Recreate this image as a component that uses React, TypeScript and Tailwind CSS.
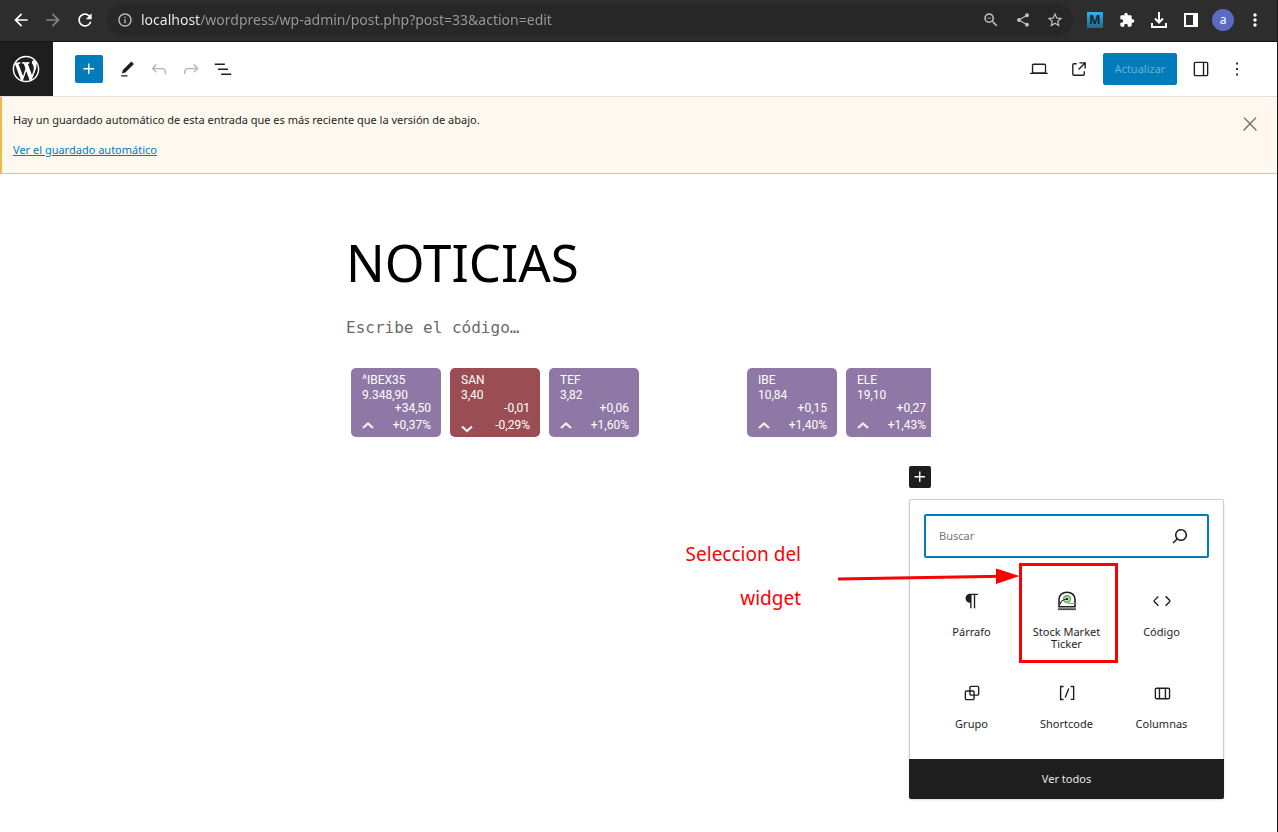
import React from "react";
import {
  MdArrowBack,
  MdArrowForward,
  MdExtension,
  MdInfoOutline,
  MdMoreVert,
  MdRefresh,
  MdShare,
  MdStarBorder,
  MdZoomOut,
} from "react-icons/md";

const paths = {
  plus: "M11 12.5V17.5H12.5V12.5H17.5V11H12.5V6H11V11H6V12.5H11Z",
  pencil: "m20.1 5.1L16.9 2 6.2 12.7l-1.3 4.4 4.5-1.3L20.1 5.1zM4 20.8h8v-1.5H4v1.5z",
  undo: "M18.3 11.7c-.6-.6-1.4-.9-2.3-.9H6.7l2.9-3.3-1.1-1-4.5 5L8.5 16l1-1-2.7-2.7H16c.5 0 .9.2 1.3.5 1 1 1 3.4 1 4.5v.3h1.5v-.2c0-1.5 0-4.3-1.5-5.7z",
  redo: "M15.6 6.5l-1.1 1 2.9 3.3H8c-.9 0-1.7.3-2.3.9-1.4 1.5-1.4 4.2-1.4 5.6v.2h1.5v-.3c0-1.1 0-3.5 1-4.5.3-.3.7-.5 1.3-.5h9.2L14.5 15l1.1 1.1 4.6-4.6-4.6-5z",
  list: "M3 6h11v1.5H3V6Zm3.5 5.5h11V13h-11v-1.5ZM21 17H10v1.5h11V17Z",
  desktop: "M20.5 16h-.7V8c0-1.1-.9-2-2-2H6.2c-1.1 0-2 .9-2 2v8h-.7c-.8 0-1.5.7-1.5 1.5h20c0-.8-.7-1.5-1.5-1.5zM5.7 8c0-.3.2-.5.5-.5h11.7c.3 0 .5.2.5.5v7.6H5.7V8z",
  external: "M19.5 4.5h-7V6h4.44l-5.97 5.97 1.06 1.06L18 7.06v4.44h1.5v-7Zm-13 1a2 2 0 0 0-2 2v10a2 2 0 0 0 2 2h10a2 2 0 0 0 2-2v-3H17v3a.5.5 0 0 1-.5.5h-10a.5.5 0 0 1-.5-.5v-10a.5.5 0 0 1 .5-.5h3V5.5h-3Z",
  drawer: "M18 4H6c-1.1 0-2 .9-2 2v12c0 1.1.9 2 2 2h12c1.1 0 2-.9 2-2V6c0-1.1-.9-2-2-2zm-4 14.5H6c-.3 0-.5-.2-.5-.5V6c0-.3.2-.5.5-.5h8v13zm4.5-.5c0 .3-.2.5-.5.5h-2.5v-13H18c.3 0 .5.2.5.5v12z",
  more: "M13 19h-2v-2h2v2zm0-6h-2v-2h2v2zm0-6h-2V5h2v2z",
  close: "M13 11.8l6.1-6.3-1-1-6.1 6.2-6.1-6.2-1 1 6.1 6.3-6.5 6.7 1 1 6.5-6.6 6.5 6.6 1-1z",
  search: "M13 5c-3.3 0-6 2.7-6 6 0 1.4.5 2.7 1.3 3.7l-3.8 3.8 1.1 1.1 3.8-3.8c1 .8 2.3 1.3 3.7 1.3 3.3 0 6-2.7 6-6S16.3 5 13 5zm0 10.5c-2.5 0-4.5-2-4.5-4.5s2-4.5 4.5-4.5 4.5 2 4.5 4.5-2 4.5-4.5 4.5z",
  paragraph: "m9.99609 14v-.2251l.00391.0001v6.225h1.5v-14.5h2.5v14.5h1.5v-14.5h3v-1.5h-8.50391c-2.76142 0-5 2.23858-5 5 0 2.7614 2.23858 5 5 5z",
  code: "M20.8 10.7l-4.3-4.3-1.1 1.1 4.3 4.3c.1.1.1.3 0 .4l-4.3 4.3 1.1 1.1 4.3-4.3c.7-.8.7-1.9 0-2.6zM4.2 11.8l4.3-4.3-1-1-4.3 4.3c-.7.7-.7 1.8 0 2.5l4.3 4.3 1.1-1.1-4.3-4.3c-.2-.1-.2-.3-.1-.4z",
  group: "M18 4h-7c-1.1 0-2 .9-2 2v3H6c-1.1 0-2 .9-2 2v7c0 1.1.9 2 2 2h7c1.1 0 2-.9 2-2v-3h3c1.1 0 2-.9 2-2V6c0-1.1-.9-2-2-2zm-4.5 14c0 .3-.2.5-.5.5H6c-.3 0-.5-.2-.5-.5v-7c0-.3.2-.5.5-.5h3V13c0 1.1.9 2 2 2h2.5v3zm0-4.5H11c-.3 0-.5-.2-.5-.5v-2.5H13c.3 0 .5.2.5.5v2.5zm5-.5c0 .3-.2.5-.5.5h-3V11c0-1.1-.9-2-2-2h-2.5V6c0-.3.2-.5.5-.5h7c.3 0 .5.2.5.5v7z",
  shortcode: "M16 4.2v1.5h2.5v12.5H16v1.5h4V4.2h-4zM4.2 19.8h4v-1.5H5.8V5.8h2.5V4.2h-4l-.1 15.6zm5.1-3.1l1.4.6 4-10-1.4-.6-4 10z",
  columns: "M15 7.5h-5v10h5v-10Zm1.5 0v10H19a.5.5 0 0 0 .5-.5V8a.5.5 0 0 0-.5-.5h-2.5ZM6 7.5h2.5v10H6a.5.5 0 0 1-.5-.5V8a.5.5 0 0 1 .5-.5ZM6 6h13a2 2 0 0 1 2 2v9a2 2 0 0 1-2 2H6a2 2 0 0 1-2-2V8a2 2 0 0 1 2-2Z",
};

type IconName = keyof typeof paths;

function Icon({ name, className = "size-[22px]" }: { name: IconName; className?: string }) {
  return (
    <svg viewBox="0 0 24 24" fill="currentColor" fillRule="evenodd" className={className} aria-hidden="true">
      <path d={paths[name]} />
    </svg>
  );
}

function WordPressLogo() {
  return (
    <svg viewBox="-2 -2 24 24" fill="currentColor" className="size-8" aria-hidden="true">
      <path d="M20 10c0-5.51-4.49-10-10-10C4.48 0 0 4.49 0 10c0 5.52 4.48 10 10 10 5.51 0 10-4.48 10-10zM7.78 15.37L4.37 6.22c.55-.02 1.17-.08 1.17-.08.5-.06.44-1.13-.06-1.11 0 0-1.45.11-2.37.11-.18 0-.37 0-.58-.01C4.12 2.69 6.87 1.11 10 1.11c2.33 0 4.45.87 6.05 2.34-.68-.11-1.65.39-1.65 1.58 0 .74.45 1.36.9 2.1.35.61.55 1.36.55 2.46 0 1.49-1.4 5-1.4 5l-3.03-8.37c.54-.02.82-.17.82-.17.5-.05.44-1.25-.06-1.22 0 0-1.44.12-2.38.12-.87 0-2.33-.12-2.33-.12-.5-.03-.56 1.2-.06 1.22l.92.08 1.26 3.41zM17.41 10c.24-.64.74-1.87.43-4.25.7 1.29 1.05 2.71 1.05 4.25 0 3.29-1.73 6.24-4.4 7.78.97-2.59 1.94-5.2 2.92-7.78zM6.1 18.09C3.12 16.65 1.11 13.53 1.11 10c0-1.3.23-2.48.72-3.59C3.25 10.3 4.67 14.2 6.1 18.09zm4.03-6.63l2.58 6.98c-.86.29-1.76.45-2.71.45-.79 0-1.57-.11-2.29-.33.81-2.38 1.62-4.74 2.42-7.1z" />
    </svg>
  );
}

function TickerIcon() {
  return (
    <svg viewBox="0 0 22 22" fill="none" className="size-[22px]" aria-hidden="true">
      <path d="M3 16.8V9.5C3 5 6.5 2.2 11 2.2S19 5 19 9.5V16.8Z" stroke="#1e1e1e" strokeWidth="1.6" />
      <path d="M2 19.2H20" stroke="#4a4a4a" strokeWidth="1.8" />
      <circle cx="11" cy="9" r="3.3" fill="#cfe8c8" stroke="#62ad57" strokeWidth="1.4" />
      <path d="M10 12.3C11 13.8 12.500 13.500 20.500 13.500" stroke="#62ad57" strokeWidth="1.1" />
      <path d="M4 14.500C4.500 11.500 7 9.500 11 9" stroke="#1e1e1e" strokeWidth="1.2" />
      <circle cx="11" cy="9" r="1.2" fill="#1e1e1e" />
    </svg>
  );
}

function BrowserButton({ label, className = "text-white", children }: { label: string; className?: string; children: React.ReactNode }) {
  return (
    <button type="button" aria-label={label} className={`flex h-8 w-8 shrink-0 items-center justify-center ${className}`}>
      {children}
    </button>
  );
}

function ToolButton({ label, icon, className = "w-8", iconClassName, disabled }: { label: string; icon: IconName; className?: string; iconClassName?: string; disabled?: boolean }) {
  return (
    <button
      type="button"
      aria-label={label}
      disabled={disabled}
      className={`flex h-8 shrink-0 items-center justify-center disabled:text-[#b4b4b4] ${className}`}
    >
      <Icon name={icon} className={iconClassName} />
    </button>
  );
}

function BrowserBar() {
  return (
    <header className="flex h-[42px] items-center border-b border-[#141414] bg-[#2d2d2d] pr-1.5 pb-px pl-[5px] text-xl">
      <BrowserButton label="Atrás"><MdArrowBack /></BrowserButton>
      <BrowserButton label="Adelante" className="text-[#858585]"><MdArrowForward /></BrowserButton>
      <BrowserButton label="Recargar"><MdRefresh /></BrowserButton>
      <div className="ml-1.5 flex h-[34px] min-w-0 grow items-center rounded-full bg-[#272727] pr-0.5 pl-2.5 text-base text-[#c0c0c0]">
        <MdInfoOutline className="shrink-0" />
        <input
          aria-label="Dirección"
          defaultValue="localhost/wordpress/wp-admin/post.php?post=33&action=edit"
          className="ml-2 min-w-0 grow bg-[linear-gradient(90deg,#f2f2f2_59px,#9a9a9a_59px)] bg-clip-text text-sm text-transparent outline-none"
        />
        <BrowserButton label="Zoom" className="text-lg text-[#c0c0c0]"><MdZoomOut /></BrowserButton>
        <BrowserButton label="Compartir" className="text-[#c0c0c0]"><MdShare /></BrowserButton>
        <BrowserButton label="Favoritos" className="text-lg text-[#c0c0c0]"><MdStarBorder /></BrowserButton>
      </div>
      <BrowserButton label="Extensión M" className="ml-1.5">
        <span className="flex size-4 items-center justify-center bg-linear-to-b from-[#2bb5f0] to-[#1f6a8f] text-xs leading-none font-bold text-[#14202b]">M</span>
      </BrowserButton>
      <BrowserButton label="Extensiones" className="text-base text-white"><MdExtension /></BrowserButton>
      <BrowserButton label="Descargas">
        <svg viewBox="0 0 16 16" className="size-4" fill="none" stroke="currentColor" strokeWidth="2" aria-hidden="true">
          <path d="M8 0v10M4 6.5l4 4 4-4M1 11v4h14v-4" />
        </svg>
      </BrowserButton>
      <BrowserButton label="Panel lateral">
        <svg viewBox="0 0 14 14" className="size-3.5" fill="currentColor" fillRule="evenodd" aria-hidden="true">
          <path d="M0 0h14v14H0zM2 2v10h7V2z" />
        </svg>
      </BrowserButton>
      <BrowserButton label="Perfil">
        <span className="flex size-[22px] items-center justify-center rounded-full bg-[#5c6bc0] text-xs">a</span>
      </BrowserButton>
      <BrowserButton label="Menú"><MdMoreVert /></BrowserButton>
    </header>
  );
}

function EditorBar() {
  return (
    <div className="flex h-[55px] items-center border-b border-[#e0e0e0] pr-7">
      <a href="#admin" aria-label="WordPress" className="flex h-full w-[53px] items-center bg-[#1e1e1e] pl-2.5 text-white">
        <WordPressLogo />
      </a>
      <button type="button" aria-label="Añadir bloque" className="mr-2 ml-[22px] flex size-7 items-center justify-center rounded-xs bg-[#007cba] text-white">
        <Icon name="plus" />
      </button>
      <ToolButton label="Herramientas" icon="pencil" iconClassName="size-[19px]" />
      <ToolButton label="Deshacer" icon="undo" disabled />
      <ToolButton label="Rehacer" icon="redo" disabled />
      <ToolButton label="Vista de lista" icon="list" />
      <div className="ml-auto flex items-center gap-2">
        <ToolButton label="Vista previa" icon="desktop" />
        <ToolButton label="Ver entrada" icon="external" />
        <button type="button" className="h-8 w-[74px] rounded-xs bg-[#007cba] text-[11px] text-[#66b0d6]">Actualizar</button>
        <ToolButton label="Ajustes" icon="drawer" />
        <ToolButton label="Opciones" icon="more" className="w-6" />
      </div>
    </div>
  );
}

function Notice() {
  return (
    <div className="flex items-start justify-between border-b border-l-2 border-b-[#c9c5bd] border-l-[#f0b849] bg-[#fef8ee] pt-3.5 pr-4 pb-3.5 pl-[11px] text-[11px]">
      <div>
        <p className="leading-[18px]">Hay un guardado automático de esta entrada que es más reciente que la versión de abajo.</p>
        <a href="#autosave" className="mt-3 block leading-[18px] text-[#007cba] underline">Ver el guardado automático</a>
      </div>
      <button type="button" aria-label="Descartar" className="mt-0.5 text-[#6b6b6b]">
        <Icon name="close" />
      </button>
    </div>
  );
}

type Quote = { symbol: string; price: string; change: string; percent: string; down?: boolean };

const quotes: (Quote | null)[] = [
  { symbol: "^IBEX35", price: "9.348,90", change: "+34,50", percent: "+0,37%" },
  { symbol: "SAN", price: "3,40", change: "-0,01", percent: "-0,29%", down: true },
  { symbol: "TEF", price: "3,82", change: "+0,06", percent: "+1,60%" },
  null,
  { symbol: "IBE", price: "10,84", change: "+0,15", percent: "+1,40%" },
  { symbol: "ELE", price: "19,10", change: "+0,27", percent: "+1,43%" },
];

function QuoteCard({ quote }: { quote: Quote }) {
  return (
    <li className={`h-[69px] w-[90px] shrink-0 rounded-[5px] pt-[5px] pr-2.5 pl-[11px] font-['Roboto',sans-serif] text-xs text-white ${quote.down ? "bg-[#9a4e53]" : "bg-[#8f78a6]"}`}>
      <p className="leading-[15px]">{quote.symbol}</p>
      <p className="leading-[15px]">{quote.price}</p>
      <p className="text-right leading-[10px]">{quote.change}</p>
      <p className="flex h-6 items-center justify-between">
        <svg viewBox="0 0 12 12" className={`size-3 ${quote.down ? "self-end" : ""}`} fill="none" stroke="#f0f0f0" strokeWidth="2.2" aria-hidden="true">
          <path d={quote.down ? "M1 1.5l5 4.5 5-4.5" : "M1 9l5-4.5L11 9"} />
        </svg>
        {quote.percent}
      </p>
    </li>
  );
}

const blocks: { label: string; icon: IconName | "ticker" }[] = [
  { label: "Párrafo", icon: "paragraph" },
  { label: "Stock Market Ticker", icon: "ticker" },
  { label: "Código", icon: "code" },
  { label: "Grupo", icon: "group" },
  { label: "Shortcode", icon: "shortcode" },
  { label: "Columnas", icon: "columns" },
];

function Inserter() {
  return (
    <div className="absolute top-[33px] left-0 w-[315px] rounded-xs border border-[#cccccc] bg-white shadow-sm">
      <div className="px-3.5 pt-3.5 pb-[9px]">
        <div className="flex h-11 items-center rounded-xs border-2 border-[#007cba] pr-[15px] pl-[13px]">
          <input type="search" aria-label="Buscar" placeholder="Buscar" className="min-w-0 grow text-[11px] outline-none placeholder:text-[#757575]" />
          <button type="button" aria-label="Buscar bloques"><Icon name="search" className="size-6" /></button>
        </div>
        <ul className="grid grid-cols-3 pt-2">
          {blocks.map((block) => (
            <li key={block.label}>
              <button type="button" className="flex h-[92px] w-full flex-col items-center gap-3.5 px-2 pt-6 text-[11px] leading-3">
                {block.icon === "ticker" ? <TickerIcon /> : <Icon name={block.icon} />}
                <span>{block.label}</span>
              </button>
            </li>
          ))}
        </ul>
      </div>
      <button type="button" className="-mx-px -mb-px block h-10 w-[315px] rounded-b-xs bg-[#1e1e1e] text-[11px] text-[#e8e8e8]">Ver todos</button>
    </div>
  );
}

function Annotation() {
  return (
    <>
      <p className="absolute top-[66px] right-[130px] w-32 text-right text-[19px] leading-[44px] text-[#ff0000]">Seleccion del widget</p>
      <svg viewBox="0 0 284 106" width="284" height="106" className="pointer-events-none absolute top-[94px] left-[-73px] max-w-none" aria-hidden="true">
        <path d="M2 19L165 16.3" stroke="#ff0000" strokeWidth="3" />
        <path d="M160 8.5L183.5 16L160 24Z" fill="#ff0000" />
        <rect x="184.5" y="4.5" width="96" height="97" fill="none" stroke="#ff0000" strokeWidth="3" />
      </svg>
    </>
  );
}

export default function App() {
  return (
    <div className="min-h-screen overflow-x-hidden border-r border-[#1a1a1a] bg-white font-['Noto_Sans',sans-serif] text-[#1e1e1e]">
      <BrowserBar />
      <EditorBar />
      <Notice />
      <main className="mx-auto max-w-[585px] pt-14">
        <h1 className="text-[51px] leading-[64px] text-black">NOTICIAS</h1>
        <textarea
          aria-label="Código"
          rows={1}
          placeholder="Escribe el código…"
          className="mt-[22px] block h-6 w-full resize-none overflow-hidden font-['DejaVu_Sans_Mono',monospace] text-base leading-6 outline-none placeholder:text-[#6b6b6b]"
        />
        <ul className="mt-7 flex gap-[9px] overflow-hidden pl-[5px]">
          {quotes.map((quote, index) =>
            quote ? <QuoteCard key={quote.symbol} quote={quote} /> : <li key={index} className="w-[90px] shrink-0" />
          )}
        </ul>
        <div className="relative mt-[29px] ml-auto size-[22px]">
          <button type="button" aria-label="Añadir bloque" className="flex size-[22px] items-center justify-center rounded-xs bg-[#1e1e1e] text-white">
            <Icon name="plus" />
          </button>
          <Inserter />
          <Annotation />
        </div>
      </main>
    </div>
  );
}
